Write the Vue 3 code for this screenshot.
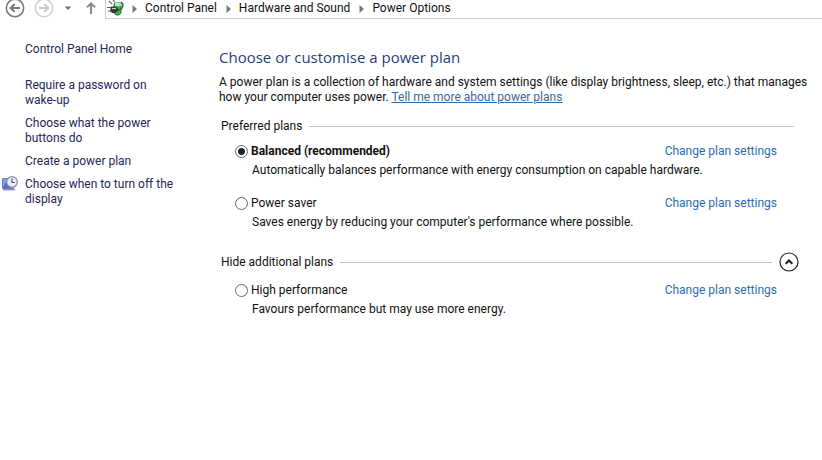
<script setup>
import { ref } from 'vue'

const crumbs = ['Control Panel', 'Hardware and Sound', 'Power Options']

const tasks = [
  { text: 'Require a password on wake-up' },
  { text: 'Choose what the power buttons do' },
  { text: 'Create a power plan' },
  { text: 'Choose when to turn off the display', icon: true }
]

const preferred = [
  { id: 'balanced', name: 'Balanced (recommended)', desc: 'Automatically balances performance with energy consumption on capable hardware.' },
  { id: 'saver', name: 'Power saver', desc: "Saves energy by reducing your computer's performance where possible." }
]
const additional = [
  { id: 'high', name: 'High performance', desc: 'Favours performance but may use more energy.' }
]

const active = ref('balanced')
const expanded = ref(true)
</script>

<template>
  <div class="window">
    <header class="navbar">
      <button class="nav-btn back" aria-label="Back">
        <svg width="20" height="20" viewBox="0 0 20 20" fill="none" stroke="#777">
          <circle cx="10" cy="9" r="8.7" stroke-width="1.5" />
          <path d="M15 9H6M9.7 5L5.7 9l4 4" stroke-width="2" />
        </svg>
      </button>
      <button class="nav-btn forward" aria-label="Forward">
        <svg width="20" height="20" viewBox="0 0 20 20" fill="none" stroke="#ccc">
          <circle cx="10" cy="9" r="8.7" stroke-width="1.3" />
          <path d="M5 9h9M10.3 5l4 4-4 4" stroke-width="2" />
        </svg>
      </button>
      <button class="nav-btn recent" aria-label="Recent locations">
        <svg width="8" height="16" viewBox="0 0 8 16"><path d="M0.5 5.5h7L4 9z" fill="#777" /></svg>
      </button>
      <button class="nav-btn up" aria-label="Up">
        <svg width="12" height="16" viewBox="0 0 12 16" fill="none" stroke="#888" stroke-width="2">
          <path d="M6 13V2.5M2 6.3L6 2.3l4 4" />
        </svg>
      </button>
      <nav class="address">
        <svg class="plug" width="18" height="18" viewBox="0 0 18 18">
          <path d="M2 1l3 3M6 0l2 2" stroke="#777" stroke-width="1.2" />
          <path d="M8 3h6v10l-2 2H9l-2-2V4z" fill="#43b053" stroke="#2c7c3a" />
          <path d="M8 3h6v3H8z" fill="#b4e8b4" />
          <path d="M4 6.5h4l3 1.5v3l-3 2H5L3 11z" fill="#333b35" />
          <path d="M0 7.5h4M1 11h4" stroke="#555" stroke-width="1.2" />
          <path d="M5 8.5h4" stroke="#ccd3cc" stroke-width="1.2" />
          <path d="M11 10c4 0 5-2 5-6l-2-2" fill="none" stroke="#3b5a40" stroke-width="1.3" />
        </svg>
        <template v-for="c in crumbs" :key="c">
          <svg class="sep" width="5" height="8" viewBox="0 0 5 8"><path d="M0.5 0L5 4 0.5 8z" fill="#777" /></svg>
          <a href="#" class="crumb">{{ c }}</a>
        </template>
      </nav>
    </header>

    <div class="body">
      <aside class="sidebar">
        <a href="#" class="home">Control Panel Home</a>
        <ul class="tasks">
          <li v-for="t in tasks" :key="t.text">
            <svg v-if="t.icon" class="task-icon" width="16" height="16" viewBox="0 0 16 16">
              <path d="M0.5 2.5h11v10h-11z" fill="#4f6cc8" stroke="#6c7fb8" />
              <path d="M1 3h5l-5 8z" fill="#7f9cea" />
              <path d="M1 13.7h12" stroke="#8a94b4" stroke-width="1.4" />
              <circle cx="10" cy="6" r="5.3" fill="#e9eef5" stroke="#8a93a3" stroke-width="1.3" />
              <path d="M10 2.5V6.5h3" fill="none" stroke="#4a5c80" stroke-width="1.2" />
            </svg>
            <a href="#">{{ t.text }}</a>
          </li>
        </ul>
      </aside>

      <main class="content">
        <h1>Choose or customise a power plan</h1>
        <p class="intro">
          A power plan is a collection of hardware and system settings (like display brightness, sleep, etc.) that manages how your computer uses power.
          <a href="#">Tell me more about power plans</a>
        </p>

        <section>
          <div class="group-head">
            <h2>Preferred plans</h2>
            <span class="rule"></span>
          </div>
          <div v-for="p in preferred" :key="p.id" class="plan">
            <div class="plan-row">
              <input :id="p.id" v-model="active" type="radio" name="plan" :value="p.id" />
              <label :for="p.id" :class="{ active: active === p.id }">{{ p.name }}</label>
              <a href="#">Change plan settings</a>
            </div>
            <p>{{ p.desc }}</p>
          </div>
        </section>

        <section>
          <div class="group-head collapsible">
            <h2>{{ expanded ? 'Hide' : 'Show' }} additional plans</h2>
            <span class="rule"></span>
            <button class="toggle" aria-label="Toggle additional plans" @click="expanded = !expanded">
              <svg width="20" height="20" viewBox="0 0 20 20" fill="none" stroke="#222">
                <circle cx="10" cy="10" r="9" stroke-width="1.2" />
                <path :d="expanded ? 'M6.7 11.8L10 8.5l3.3 3.3' : 'M6.7 8.5l3.3 3.3 3.3-3.3'" stroke-width="2.2" />
              </svg>
            </button>
          </div>
          <template v-if="expanded">
            <div v-for="p in additional" :key="p.id" class="plan">
              <div class="plan-row">
                <input :id="p.id" v-model="active" type="radio" name="plan" :value="p.id" />
                <label :for="p.id" :class="{ active: active === p.id }">{{ p.name }}</label>
                <a href="#">Change plan settings</a>
              </div>
              <p>{{ p.desc }}</p>
            </div>
          </template>
        </section>
      </main>
    </div>
  </div>
</template>

<style>
body {
  background: #fff;
}
</style>

<style scoped>
.window {
  font-family: "Segoe UI", Roboto, "Open Sans", sans-serif;
  font-size: 12px;
  line-height: 15px;
  color: #111;
}

a {
  color: #2a6cb4;
  text-decoration: none;
}

h1, h2, p, ul {
  margin: 0;
  padding: 0;
  font-weight: 400;
}

button {
  padding: 0;
  border: 0;
  background: none;
  display: flex;
}

.navbar {
  display: flex;
  align-items: flex-end;
  height: 19px;
  padding-left: 5px;
}

.nav-btn {
  align-items: center;
  height: 20px;
}

.forward { margin-left: 9px; }
.recent { margin-left: 10px; }
.up { margin-left: 13px; }

.address {
  flex: 1;
  display: flex;
  align-items: center;
  height: 19px;
  margin-left: 8px;
  padding-bottom: 1px;
  box-sizing: border-box;
  border-left: 1px solid #ccc;
  border-bottom: 1px solid #ccc;
}

.plug { margin-left: 1px; }

.sep {
  margin: 0 8px 0 7px;
}

.sep ~ .sep { margin-left: 9px; }

.crumb { color: #111; }

.body {
  display: flex;
  padding-top: 23px;
}

.sidebar {
  flex: none;
  width: 194px;
  padding-left: 25px;
}

.sidebar a { color: #26265a; }

.home { display: block; }

.tasks {
  display: flex;
  flex-direction: column;
  gap: 8px;
  width: 155px;
  margin-top: 21px;
  list-style: none;
}

.tasks li { position: relative; }

.task-icon {
  position: absolute;
  left: -23px;
  top: -1px;
}

.content {
  flex: 1;
  padding: 4px 10px 0 0;
}

h1 {
  font-family: "Segoe UI", "Open Sans", sans-serif;
  font-size: 15px;
  line-height: 22px;
  color: #1f3f7c;
}

.intro {
  margin-top: 7px;
}

.intro a { text-decoration: underline; }

section { margin-right: 13px; }

.group-head {
  display: flex;
  align-items: center;
  gap: 7px;
  margin-top: 14px;
  padding: 0 5px 0 2px;
}

h2 {
  font-size: 12px;
}

.rule {
  flex: 1;
  border-top: 1px solid #c4c4c4;
}

.collapsible {
  margin-top: 22px;
  padding-right: 0;
}

.plan {
  margin: 18px 22px 0 16px;
}

.group-head + .plan { margin-top: 10px; }
.collapsible + .plan { margin-top: 11px; }

.plan-row {
  display: flex;
  align-items: center;
}

.plan-row a { margin-left: auto; }

.plan-row input {
  appearance: none;
  width: 13px;
  height: 13px;
  margin: 0 3px 0 0;
  border: 1px solid #666;
  border-radius: 50%;
  background: #fff;
}

.plan-row input:checked {
  background: radial-gradient(circle, #222 3px, #fff 4px);
}

.active { font-weight: 700; }

.plan p {
  margin-top: 4px;
  padding-left: 17px;
}
</style>
